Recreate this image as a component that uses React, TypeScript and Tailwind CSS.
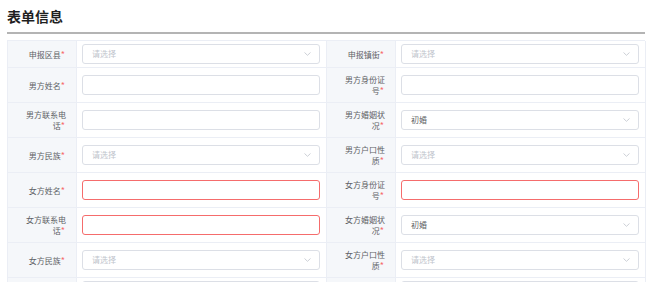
import React from 'react';

type Field = {
  label: string;
  kind: 'select' | 'input';
  value?: string;
  error?: boolean;
};

const rows: [Field, Field][] = [
  [{ label: '申报区县', kind: 'select' }, { label: '申报镇街', kind: 'select' }],
  [{ label: '男方姓名', kind: 'input' }, { label: '男方身份证号', kind: 'input' }],
  [{ label: '男方联系电话', kind: 'input' }, { label: '男方婚姻状况', kind: 'select', value: '初婚' }],
  [{ label: '男方民族', kind: 'select' }, { label: '男方户口性质', kind: 'select' }],
  [{ label: '女方姓名', kind: 'input', error: true }, { label: '女方身份证号', kind: 'input', error: true }],
  [{ label: '女方联系电话', kind: 'input', error: true }, { label: '女方婚姻状况', kind: 'select', value: '初婚' }],
  [{ label: '女方民族', kind: 'select' }, { label: '女方户口性质', kind: 'select' }],
  [{ label: '登记日期', kind: 'input' }, { label: '登记机关', kind: 'input' }],
];

const Chevron = () => (
  <svg width="7" height="4" viewBox="0 0 7 4" className="shrink-0">
    <polyline points="0.5,0.5 3.5,3.3 6.5,0.5" fill="none" stroke="#c0c4cc" strokeWidth="0.8" />
  </svg>
);

const LabelCell: React.FC<{ label: string }> = ({ label }) => (
  <div className="flex items-center justify-end bg-[#f5f7fa] border-r border-b border-[#ebeef5] pl-[13px] pr-[10px] py-[6px] text-[8px] leading-[11px] text-[#606266] text-right">
    <span>
      {label}
      <span className="text-[#f56c6c] text-[9px] mr-[1px]">*</span>
    </span>
  </div>
);

const ValueCell: React.FC<{ field: Field }> = ({ field }) => (
  <div className="flex items-center pl-[5px] pr-[6px] py-[3px] border-r border-b border-[#ebeef5]">
    <div
      className={`flex items-center justify-between w-full h-[20px] rounded-[3px] border bg-white pl-[9px] pr-[8px] text-[8px] ${
        field.error ? 'border-[#f56c6c]' : 'border-[#dcdfe6]'
      }`}
    >
      {field.kind === 'select' ? (
        <>
          <span className={field.value ? 'text-[#606266]' : 'text-[#c0c4cc]'}>{field.value ?? '请选择'}</span>
          <Chevron />
        </>
      ) : (
        <span />
      )}
    </div>
  </div>
);

export default function App() {
  return (
    <div className="w-[650px] h-[282px] overflow-hidden bg-white font-['Noto_Sans_CJK_SC',sans-serif]">
      <div className="pl-[7px] pr-[5px]">
        <div className="pt-[6px] text-[14px] leading-[20px] font-semibold text-[#1f1f1f]">表单信息</div>
        <div className="mt-[6px] h-[2px] bg-[#b4b4b4]" />
        <div className="mt-[6px] grid grid-cols-[69px_250px_69px_250px] border-l border-t border-[#ebeef5]">
          {rows.map(([a, b], i) => (
            <React.Fragment key={i}>
              <LabelCell label={a.label} />
              <ValueCell field={a} />
              <LabelCell label={b.label} />
              <ValueCell field={b} />
            </React.Fragment>
          ))}
        </div>
      </div>
    </div>
  );
}
